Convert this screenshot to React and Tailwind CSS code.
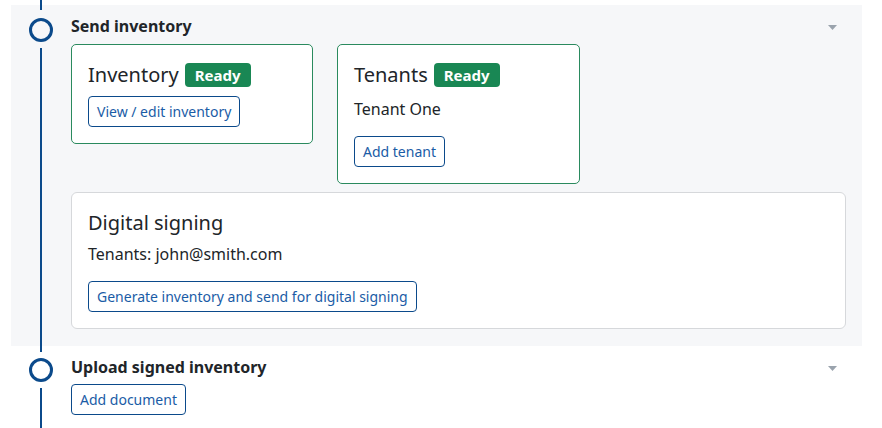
import React from 'react';

const Caret = () => (
  <svg width="9" height="5" viewBox="0 0 9 5" className="mt-[3px]">
    <path d="M0 0 H9 L4.5 5 Z" fill="#9aa3ad" />
  </svg>
);

const Badge = () => (
  <span className="inline-flex items-center h-6 px-[10px] rounded-[4px] bg-[#198754] text-white text-[15px] font-bold leading-none">
    Ready
  </span>
);

const Btn = ({ children }) => (
  <button
    type="button"
    className="h-[31px] px-2 rounded-[4px] border border-[#0b4a8b] text-[#1a5ca6] text-[14px] leading-none bg-white"
  >
    {children}
  </button>
);

const Rail = ({ top, gap }) => (
  <div className="w-[60px] shrink-0 flex flex-col items-center">
    <div className="w-[2px] bg-[#0b4a8b]" style={{ height: top }} />
    <div className="w-6 h-6 rounded-full border-[3px] border-[#0b4a8b]" style={{ marginTop: gap }} />
    <div className="w-[2px] flex-1 bg-[#0b4a8b] mt-[6px]" />
  </div>
);

const StepHeader = ({ title }) => (
  <div className="flex items-center justify-between pt-[9px] pr-[9px]">
    <h3 className="text-[16px] leading-6 font-bold text-[#212529]">{title}</h3>
    <Caret />
  </div>
);

export default function App() {
  return (
    <div className="w-[882px] h-[428px] overflow-hidden bg-white text-[#212529]" style={{ fontFamily: '"Noto Sans", "Open Sans", sans-serif' }}>
      <div className="h-[5px] pl-[40px]">
        <div className="w-[2px] h-full bg-[#0b4a8b]" />
      </div>

      <div className="ml-[11px] mr-[20px] flex bg-[#f6f7f9]">
        <Rail top={5} gap={8} />
        <div className="flex-1 pb-[17px] pr-4">
          <StepHeader title="Send inventory" />
          <div className="mt-[6px] flex items-start gap-6">
            <div className="w-[242px] bg-white border border-[#2a8a5e] rounded-[5px] p-4">
              <div className="flex items-center gap-[6px] h-7">
                <span className="text-[20px] leading-7">Inventory</span>
                <Badge />
              </div>
              <div className="mt-[7px]">
                <Btn>View / edit inventory</Btn>
              </div>
            </div>
            <div className="w-[243px] bg-white border border-[#2a8a5e] rounded-[5px] p-4">
              <div className="flex items-center gap-[6px] h-7">
                <span className="text-[20px] leading-7">Tenants</span>
                <Badge />
              </div>
              <p className="mt-2 text-[16px] leading-6">Tenant One</p>
              <div className="mt-[15px]">
                <Btn>Add tenant</Btn>
              </div>
            </div>
          </div>
          <div className="mt-2 bg-white border border-[#d6d8db] rounded-[6px] p-4">
            <h4 className="text-[20px] leading-7">Digital signing</h4>
            <p className="mt-[5px] text-[16px] leading-6">Tenants: john@smith.com</p>
            <div className="mt-[15px]">
              <Btn>Generate inventory and send for digital signing</Btn>
            </div>
          </div>
        </div>
      </div>

      <div className="ml-[11px] mr-[20px] flex">
        <Rail top={6} gap={6} />
        <div className="flex-1 pr-4 pb-10">
          <StepHeader title="Upload signed inventory" />
          <div className="mt-[5px]">
            <Btn>Add document</Btn>
          </div>
        </div>
      </div>
    </div>
  );
}
